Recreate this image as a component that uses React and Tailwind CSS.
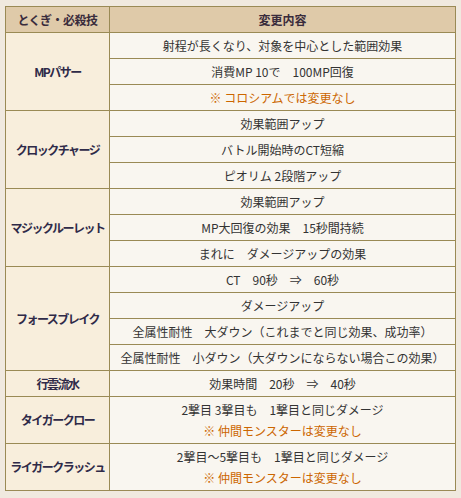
import React from 'react';

const skills = [
    {
        name: 'MPパサー',
        rows: [
            ['射程が長くなり、対象を中心とした範囲効果'],
            ['消費MP 10で　100MP回復'],
            [{ note: '※ コロシアムでは変更なし' }],
        ],
    },
    {
        name: 'クロックチャージ',
        rows: [['効果範囲アップ'], ['バトル開始時のCT短縮'], ['ピオリム 2段階アップ']],
    },
    {
        name: 'マジックルーレット',
        rows: [['効果範囲アップ'], ['MP大回復の効果　15秒間持続'], ['まれに　ダメージアップの効果']],
    },
    {
        name: 'フォースブレイク',
        rows: [
            ['CT　90秒　⇒　60秒'],
            ['ダメージアップ'],
            ['全属性耐性　大ダウン（これまでと同じ効果、成功率）'],
            ['全属性耐性　小ダウン（大ダウンにならない場合この効果）'],
        ],
    },
    {
        name: '行雲流水',
        rows: [['効果時間　20秒　⇒　40秒']],
    },
    {
        name: 'タイガークロー',
        rows: [['2撃目 3撃目も　1撃目と同じダメージ', { note: '※ 仲間モンスターは変更なし' }]],
    },
    {
        name: 'ライガークラッシュ',
        rows: [['2撃目～5撃目も　1撃目と同じダメージ', { note: '※ 仲間モンスターは変更なし' }]],
    },
];

const Line = ({ item }) =>
    typeof item === 'string' ? (
        <div className="whitespace-pre">{item}</div>
    ) : (
        <div className="whitespace-pre text-[#cc6600]">{item.note}</div>
    );

export default function App() {
    return (
        <div
            className="min-h-[498px] bg-[#f0e9df] pt-[6px] pl-[5px] text-[12px] text-[#333]"
            style={{ fontFamily: '"Noto Sans CJK JP", "Noto Sans", sans-serif' }}
        >
            <table className="w-[451px] table-fixed border-collapse border border-[#9a8a55]">
                <colgroup>
                    <col className="w-[104px]" />
                    <col />
                </colgroup>
                <thead>
                    <tr className="h-[26px] bg-[#dfcaa9]">
                        <th className="border border-[#9a8a55] font-bold text-[#3a2c3c] leading-[14px] tracking-[-0.5px]">とくぎ・必殺技</th>
                        <th className="border border-[#9a8a55] font-bold text-[#3a2c3c] leading-[14px]">変更内容</th>
                    </tr>
                </thead>
                <tbody>
                    {skills.map((s) =>
                        s.rows.map((lines, i) => (
                            <tr key={s.name + i} className={lines.length > 1 ? 'h-[47px]' : 'h-[26px]'}>
                                {i === 0 && (
                                    <td
                                        rowSpan={s.rows.length}
                                        className="whitespace-nowrap border border-[#9a8a55] bg-[#f8eedc] px-0 text-center font-bold tracking-[-1.5px] text-[#2f2a48]"
                                    >
                                        {s.name}
                                    </td>
                                )}
                                <td className="border border-[#9a8a55] bg-[#f9f6f0] text-center leading-[21px]">
                                    {lines.map((l, j) => (
                                        <Line key={j} item={l} />
                                    ))}
                                </td>
                            </tr>
                        ))
                    )}
                </tbody>
            </table>
        </div>
    );
}
